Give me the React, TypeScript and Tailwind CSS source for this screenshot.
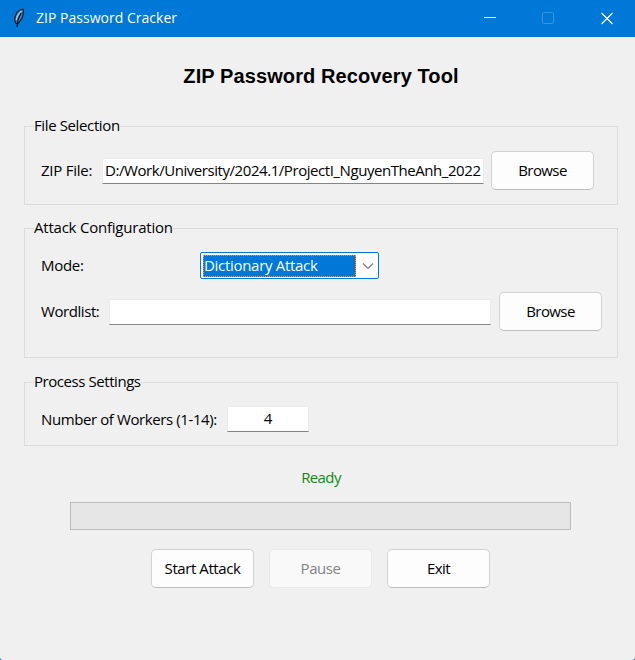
import type { ReactNode } from "react";

function Group({ title, titleClass, className, children }: { title: string; titleClass: string; className: string; children: ReactNode }) {
  return (
    <section className={`border border-[#dcdcdc] ${className}`}>
      <h2 className={`ml-[9px] -mt-[11px] h-5 w-fit bg-[#f0f0f0] leading-[18px] whitespace-nowrap ${titleClass}`}>{title}</h2>
      {children}
    </section>
  );
}

function Button({ children, disabled = false, className = "" }: { children: ReactNode; disabled?: boolean; className?: string }) {
  return (
    <button
      disabled={disabled}
      className={`flex h-[39px] w-[103px] shrink-0 items-center justify-center rounded-[5px] border whitespace-nowrap ${
        disabled ? "border-[#eaeaea] bg-[#f9f9f9] text-[#838383]" : "border-[#d2d2d2] border-b-[#bdbdbd] bg-[#fdfdfd] text-black"
      } ${className}`}
    >
      {children}
    </button>
  );
}

const field = "h-[26px] shrink-0 overflow-hidden border border-[#ebebeb] border-b-[#868686] bg-white leading-[22px] whitespace-nowrap";

export default function App() {
  return (
    <div className="h-[660px] w-[635px] overflow-hidden bg-[#0078d7] font-['Open_Sans','Noto_Sans',sans-serif] text-[15px] text-black">
      <header className="flex h-[37px] items-center text-white">
        <svg className="ml-[12px] h-[22px] w-[14px] shrink-0" viewBox="0 0 14 22">
          <path d="M4 15.5C1.8 12.5 2.6 7.8 5.3 4.4 7 2.3 9 1.2 11.2 1.3c.6 4-.3 8-2.7 11L5.8 15.7Z" fill="#4f7fb8" stroke="#10202e" strokeWidth="1.3" />
          <path d="M9.2 5C7.3 8 5.3 12 4.9 19" fill="none" stroke="#071625" strokeWidth="1.3" />
          <path d="M9.6 2.8C6.6 5.4 4.9 8 4.3 12" fill="none" stroke="#a8c5e4" strokeWidth="1.3" />
        </svg>
        <h1 className="ml-[10px] w-[300px] pb-[2px] text-[14px] leading-5 tracking-[0.02px] whitespace-nowrap">ZIP Password Cracker</h1>
        <svg className="ml-auto mr-[20px] h-4 w-[132px] shrink-0" viewBox="0 0 132 16" fill="none" stroke="white">
          <path d="M1 6.5h12" />
          <rect x="59.5" y="1.5" width="11" height="11" rx="1" stroke="#3795df" />
          <path d="m118.5 2 11 11M129.5 2l-11 11" strokeWidth="1.1" />
        </svg>
      </header>

      <main className="flex h-[623px] flex-col rounded-b-[3px] bg-[#f0f0f0] pl-6 pr-[17px]">
        <h2 className="mt-[27px] h-6 text-center font-['Liberation_Sans',sans-serif] text-[20px] leading-6 font-bold tracking-[0.1px] whitespace-nowrap text-black">
          ZIP Password Recovery Tool
        </h2>

        <Group title="File Selection" titleClass="tracking-[-0.38px]" className="mt-[38px] h-[79px]">
          <div className="mt-[15px] flex items-center pl-4">
            <span className="w-[61px] tracking-[-0.24px] whitespace-nowrap">ZIP File:</span>
            <div className={`${field} w-[382px] pl-[2px]`}>
              <div className="tracking-[-0.44px]">D:/Work/University/2024.1/ProjectI_NguyenTheAnh_2022</div>
            </div>
            <Button className="ml-[7px] tracking-[-0.6px]">Browse</Button>
          </div>
        </Group>

        <Group title="Attack Configuration" titleClass="tracking-[-0.22px]" className="mt-[23px] h-[130px]">
          <div className="mt-[14px] flex items-center pl-4">
            <span className="w-[159px] tracking-[-0.3px]">Mode:</span>
            <div className="flex h-[27px] w-[179px] items-center rounded-[2px] border border-[#0078d7] bg-white pl-[2px]">
              <div className="h-[22px] w-[153px] border border-dotted border-[#d99a67] bg-[#0078d7] leading-[18px] tracking-[-0.3px] whitespace-nowrap text-white">
                Dictionary Attack
              </div>
              <svg className="ml-[6px] h-2 w-3" viewBox="0 0 12 8" fill="none" stroke="#777777" strokeWidth="1.2">
                <path d="m1 1.5 5 5 5-5" />
              </svg>
            </div>
          </div>
          <div className="mt-[13px] flex items-center pl-4">
            <span className="w-[68px] tracking-[-0.43px] whitespace-nowrap">Wordlist:</span>
            <div className={`${field} w-[382px]`} />
            <Button className="ml-[8px] tracking-[-0.6px]">Browse</Button>
          </div>
        </Group>

        <Group title="Process Settings" titleClass="tracking-[-0.44px]" className="mt-[24px] h-[64px]">
          <div className="mt-[14px] flex items-center pl-4">
            <span className="w-[186px] tracking-[-0.4px] whitespace-nowrap">Number of Workers (1-14):</span>
            <div className={`${field} w-[82px] text-center`}>4</div>
          </div>
        </Group>

        <p className="mt-[22px] h-5 text-center leading-[18px] tracking-[-0.6px] text-[#148a14]">Ready</p>
        <div className="mt-[14px] ml-[46px] h-[28px] w-[501px] border border-[#bcbcbc] bg-[#e6e6e6]" />
        <div className="mt-[19px] ml-[127px] flex gap-[15px]">
          <Button className="tracking-[-0.42px]">Start Attack</Button>
          <Button disabled className="tracking-[-0.46px]">Pause</Button>
          <Button className="tracking-[-0.6px]">Exit</Button>
        </div>
      </main>
    </div>
  );
}
